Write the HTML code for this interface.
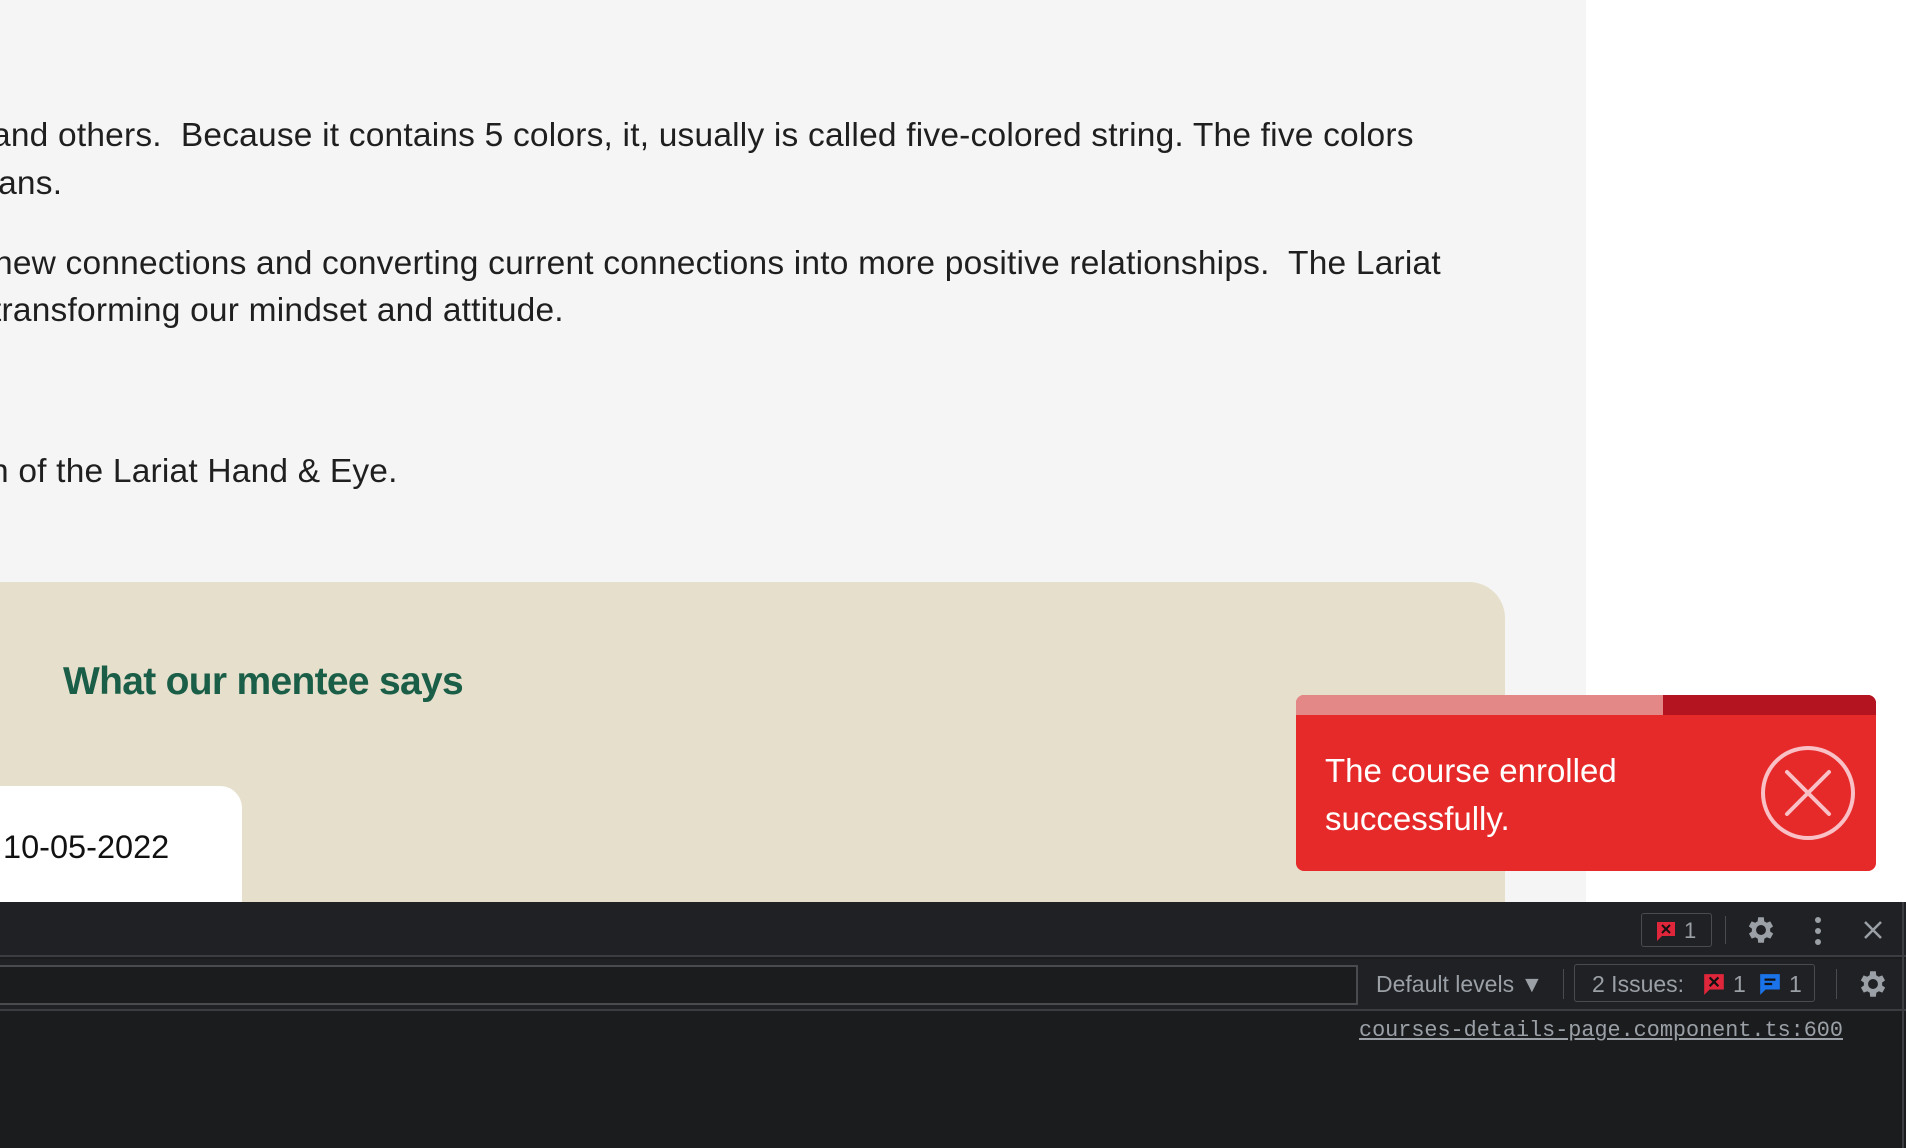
<!DOCTYPE html>
<html><head><meta charset="utf-8"><style>
*{margin:0;padding:0;box-sizing:border-box}
body{width:1906px;height:1148px;overflow:hidden;position:relative;background:#fff;font-family:"Liberation Sans",sans-serif}
.page{position:absolute;left:0;top:0;width:1586px;height:902px;background:#f5f5f5}
.t{position:absolute;white-space:pre;font-size:33.5px;color:#1f1f1f;line-height:40px;letter-spacing:0.2px}
.beige{position:absolute;left:0;top:582px;width:1505px;height:340px;background:#e5dfcc;border-top-right-radius:36px}
h2{position:absolute;left:63px;top:660px;font-size:39px;color:#1a5e48;font-weight:bold;letter-spacing:-0.7px}
.card{position:absolute;left:0;top:786px;width:242px;height:140px;background:#fff;border-top-right-radius:22px}
.date{position:absolute;left:3px;top:829px;font-size:32.5px;color:#111}
.toast{position:absolute;left:1296px;top:695px;width:580px;height:176px;background:#e62a2a;border-radius:8px;overflow:hidden}
.bar1{position:absolute;left:0;top:0;width:367px;height:20px;background:#e48787}
.bar2{position:absolute;left:367px;top:0;right:0;height:20px;background:#b3141f}
.tt{position:absolute;left:29px;top:52px;font-size:33px;line-height:48px;color:#fff}
.dev{position:absolute;left:0;top:902px;width:1906px;height:246px;background:#1b1c1e}
.r1{position:absolute;left:0;top:0;width:1906px;height:55px;background:#202124;border-bottom:2px solid #3c3d40}
.r2{position:absolute;left:0;top:57px;width:1906px;height:52px;background:#202124;border-bottom:2px solid #3c3d40}
.g{color:#9aa0a6}
</style></head><body>
<div class="page">
<div class="t" style="left:-8px;top:116px">and others.  Because it contains 5 colors, it, usually is called five-colored string. The five colors</div>
<div class="t" style="left:-30px;top:164px">mans.</div>
<div class="t" style="left:-6px;top:244px">new connections and converting current connections into more positive relationships.  The Lariat</div>
<div class="t" style="left:-8px;top:291px">transforming our mindset and attitude.</div>
<div class="t" style="left:-10px;top:452px">n of the Lariat Hand &amp; Eye.</div>
</div>
<div class="beige"></div>
<h2>What our mentee says</h2>
<div class="card"></div>
<div class="date">10-05-2022</div>
<div class="toast"><div class="bar1"></div><div class="bar2"></div>
<div class="tt">The course enrolled<br>successfully.</div>
<svg style="position:absolute;left:462px;top:51px" width="100" height="100" viewBox="0 0 100 100"><circle cx="50" cy="47" r="45" fill="none" stroke="#f9c0c6" stroke-width="4"/><path d="M29 26 L71 68 M71 26 L29 68" stroke="#f9c0c6" stroke-width="4" stroke-linecap="round"/></svg>
</div>
<div class="dev">
<div class="r1">
<div style="position:absolute;left:1641px;top:11px;width:71px;height:34px;border:1px solid #4a4b4e;border-radius:3px"></div>
<svg style="position:absolute;left:1655px;top:18px" width="22" height="22" viewBox="0 0 22 22"><path d="M2 2h18v14H7l-5 5z" fill="#e0263a"/><path d="M7 5l8 8M15 5l-8 8" stroke="#111" stroke-width="2"/></svg>
<div class="g" style="position:absolute;left:1684px;top:16px;font-size:22px">1</div>
<div style="position:absolute;left:1725px;top:14px;width:1px;height:28px;background:#4a4b4e"></div>
<svg style="position:absolute;left:1744px;top:11px" width="34" height="34" viewBox="0 0 24 24"><path fill="#9aa0a6" d="M19.4 13a7.5 7.5 0 000-2l2.1-1.6-2-3.5-2.5 1a7 7 0 00-1.7-1L15 3h-4l-.4 2.9a7 7 0 00-1.7 1l-2.5-1-2 3.5L6.6 11a7.5 7.5 0 000 2l-2.1 1.6 2 3.5 2.5-1a7 7 0 001.7 1L11 21h4l.4-2.9a7 7 0 001.7-1l2.5 1 2-3.5zM13 15.5a3.5 3.5 0 110-7 3.5 3.5 0 010 7z" transform="translate(-1 0)"/></svg>
<svg style="position:absolute;left:1812px;top:13px" width="12" height="32"><circle cx="6" cy="5" r="3" fill="#9aa0a6"/><circle cx="6" cy="16" r="3" fill="#9aa0a6"/><circle cx="6" cy="27" r="3" fill="#9aa0a6"/></svg>
<svg style="position:absolute;left:1862px;top:17px" width="22" height="22"><path d="M3 3l16 16M19 3L3 19" stroke="#9aa0a6" stroke-width="2.5"/></svg>
</div>
<div class="r2">
<div style="position:absolute;left:-2px;top:6px;width:1360px;height:40px;border:2px solid #4a4b4e;background:#1b1c1e"></div>
<div class="g" style="position:absolute;left:1376px;top:12px;font-size:23px">Default levels ▼</div>
<div style="position:absolute;left:1563px;top:10px;width:1px;height:30px;background:#4a4b4e"></div>
<div style="position:absolute;left:1574px;top:5px;width:241px;height:38px;border:1px solid #4a4b4e;border-radius:3px"></div>
<div class="g" style="position:absolute;left:1592px;top:12px;font-size:23px">2 Issues:</div>
<svg style="position:absolute;left:1702px;top:13px" width="24" height="24" viewBox="0 0 22 22"><path d="M2 2h18v14H7l-5 5z" fill="#e0263a"/><path d="M7 5l8 8M15 5l-8 8" stroke="#111" stroke-width="2"/></svg>
<div class="g" style="position:absolute;left:1733px;top:12px;font-size:23px">1</div>
<svg style="position:absolute;left:1758px;top:13px" width="24" height="24" viewBox="0 0 22 22"><path d="M2 2h18v14H7l-5 5z" fill="#1a73e8"/><path d="M6 7h10M6 11h7" stroke="#111" stroke-width="2"/></svg>
<div class="g" style="position:absolute;left:1789px;top:12px;font-size:23px">1</div>
<div style="position:absolute;left:1836px;top:10px;width:1px;height:30px;background:#4a4b4e"></div>
<svg style="position:absolute;left:1856px;top:8px" width="34" height="34" viewBox="0 0 24 24"><path fill="#9aa0a6" d="M19.4 13a7.5 7.5 0 000-2l2.1-1.6-2-3.5-2.5 1a7 7 0 00-1.7-1L15 3h-4l-.4 2.9a7 7 0 00-1.7 1l-2.5-1-2 3.5L6.6 11a7.5 7.5 0 000 2l-2.1 1.6 2 3.5 2.5-1a7 7 0 001.7 1L11 21h4l.4-2.9a7 7 0 001.7-1l2.5 1 2-3.5zM13 15.5a3.5 3.5 0 110-7 3.5 3.5 0 010 7z" transform="translate(-1 0)"/></svg>
</div>
<div class="g" style="position:absolute;left:1359px;top:116px;font-family:'Liberation Mono',monospace;font-size:21.8px;text-decoration:underline">courses-details-page.component.ts:600</div>
<div style="position:absolute;left:1902px;top:0;width:2px;height:246px;background:#3c3d40"></div>
</div>
</body></html>
